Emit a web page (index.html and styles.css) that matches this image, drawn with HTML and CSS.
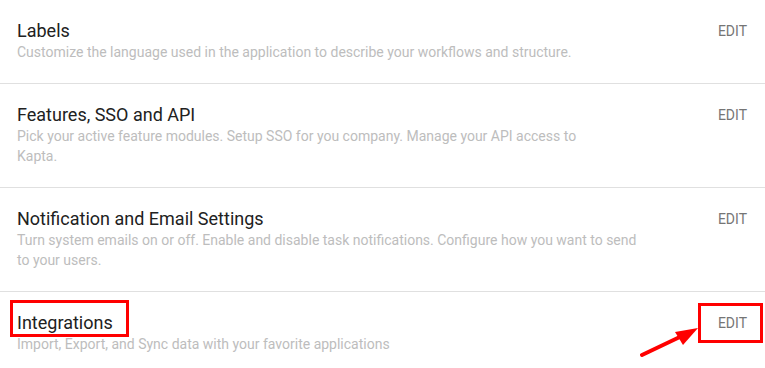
FILE: index.html
```html
<!DOCTYPE html>
<html lang="en">
<head>
  <meta charset="UTF-8">
  <meta name="viewport" content="width=device-width, initial-scale=1">
  <title>Kapta - Settings</title>
  <link rel="stylesheet" href="styles.css">
</head>
<body>

<div class="settings-list">

  <div class="setting-row">
    <div class="setting-text">
      <div class="setting-title">Labels</div>
      <div class="setting-desc">Customize the language used in the application to describe your workflows and structure.</div>
    </div>
    <a href="#" class="edit-link">EDIT</a>
  </div>

  <div class="setting-row">
    <div class="setting-text">
      <div class="setting-title">Features, SSO and API</div>
      <div class="setting-desc">Pick your active feature modules. Setup SSO for you company. Manage your API access to<br>Kapta.</div>
    </div>
    <a href="#" class="edit-link">EDIT</a>
  </div>

  <div class="setting-row">
    <div class="setting-text">
      <div class="setting-title">Notification and Email Settings</div>
      <div class="setting-desc">Turn system emails on or off. Enable and disable task notifications. Configure how you want to send to your users.</div>
    </div>
    <a href="#" class="edit-link">EDIT</a>
  </div>

  <div class="setting-row highlighted">
    <div class="setting-text">
      <div class="setting-title"><span class="mark">Integrations</span></div>
      <div class="setting-desc">Import, Export, and Sync data with your favorite applications</div>
    </div>
    <a href="#" class="edit-link"><span class="mark mark-edit">EDIT</span></a>

    <!-- annotation arrow pointing at the edit button -->
    <svg class="arrow" width="70" height="40" viewBox="0 0 70 40">
      <line x1="2" y1="37" x2="44" y2="17" stroke="#ff0000" stroke-width="4" stroke-linecap="round"/>
      <polygon points="35,14 58,10 43,27" fill="#ff0000"/>
    </svg>
  </div>

</div>

</body>
</html>
```

FILE: styles.css
```css
:root {
  --title: #212121;
  --muted: #bdbdbd;
  --action: #757575;
  --divider: #e0e0e0;
  --annotate: #ff0000;
}

body {
  margin: 0;
  font-family: Roboto, 'Noto Sans', sans-serif;
  background-color: #ffffff;
}

.settings-list {
  width: 765px;
}

.setting-row {
  position: relative;
  display: flex;
  justify-content: space-between;
  align-items: flex-start;
  padding: 20px 18px 21px 17px;
  border-bottom: 1px solid var(--divider);
}

.setting-text {
  max-width: 625px;
}

.setting-title {
  font-size: 18px;
  line-height: 22px;
  color: var(--title);
}

.setting-desc {
  font-size: 14px;
  line-height: 20px;
  color: var(--muted);
}

.edit-link {
  font-size: 14px;
  line-height: 22px;
  color: var(--action);
  text-decoration: none;
}

/* Red annotation boxes */
.mark {
  display: inline-block;
  margin: -12px -16px -3px -7px;
  padding: 9px 13px 0 4px;
  border: 3px solid var(--annotate);
}

.mark-edit {
  margin: -9px -16px -9px -20px;
  padding: 6px 13px 6px 17px;
}

.arrow {
  position: absolute;
  left: 640px;
  top: 26px;
}
```
